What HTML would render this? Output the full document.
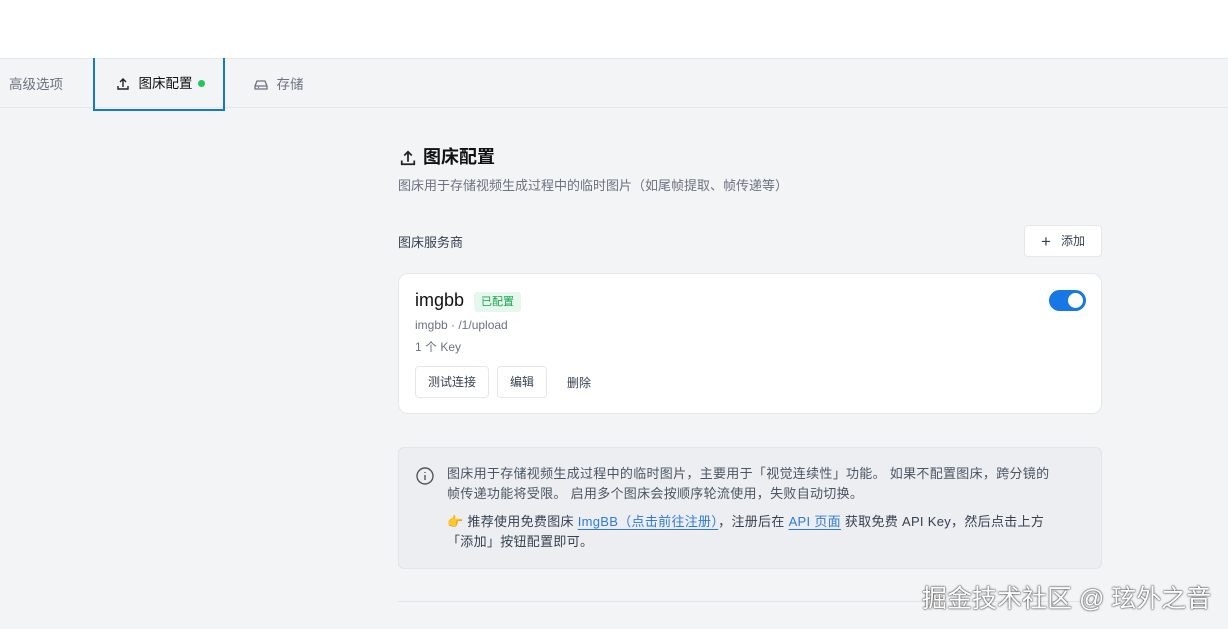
<!DOCTYPE html>
<html><head><meta charset="utf-8"><style>
*{box-sizing:border-box;margin:0;padding:0}
body{width:1228px;height:629px;overflow:hidden;background:#f3f4f6;font-family:"Liberation Sans","Noto Sans CJK SC",sans-serif;color:#1f2937;position:relative}
.top{height:59px;background:#fff;border-bottom:1px solid #e5e7eb}
.tabs{height:49px;border-bottom:1px solid #e5e7eb;position:relative;font-size:13.5px}
.tab{position:absolute;top:0;height:48px;line-height:48px;color:#6b7280}
.active{left:93px;width:132px;top:-1px;height:53px;border:2px solid #1677d2;border-top:none;color:#111;padding-left:20px;line-height:48px}
.dot{display:inline-block;width:7px;height:7px;border-radius:50%;background:#22c55e;margin-left:5px;vertical-align:1px}
svg{vertical-align:middle}
.abs{position:absolute}
.card{position:absolute;left:398px;top:273px;width:704px;height:141px;background:#fff;border:1px solid #e5e7eb;border-radius:10px}
.btn{position:absolute;height:32px;line-height:30px;border:1px solid #e5e7eb;border-radius:4px;background:#fff;font-size:12px;color:#374151;text-align:center}
.info{position:absolute;left:398px;top:447px;width:704px;height:122px;background:#eceef1;border:1px solid #e1e4e8;border-radius:6px;font-size:13px;color:#4b5563;line-height:20px;letter-spacing:0.3px}
a{color:#2f7bd8;text-decoration:underline;text-underline-offset:3px}
</style></head><body>
<div class="top"></div>
<div class="tabs">
<div class="tab" style="left:9px;top:2px">高级选项</div>
<div class="tab active" style="padding-top:2px"><svg width="16" height="16" viewBox="0 0 16 16" fill="none" stroke="#222" stroke-width="1.4"><path d="M8 11V3M5 6l3-3 3 3M3 10v3h10v-3"/></svg>&nbsp; 图床配置<span class="dot"></span></div>
<div class="tab" style="left:253px;top:2px"><svg width="16" height="16" viewBox="0 0 16 16" fill="none" stroke="#6b7280" stroke-width="1.3"><path d="M2 9l2-5h8l2 5v3H2zM2 9h12M5 10.5h1"/></svg>&nbsp; 存储</div>
</div>
<div class="abs" style="left:398px;top:143px;font-size:18px;font-weight:bold;color:#111"><svg width="20" height="20" viewBox="0 0 16 16" fill="none" stroke="#222" stroke-width="1.4"><path d="M8 11V3M5 6l3-3 3 3M3 10v3h10v-3"/></svg> 图床配置</div>
<div class="abs" style="left:398px;top:175px;font-size:13px;color:#6b7280">图床用于存储视频生成过程中的临时图片（如尾帧提取、帧传递等）</div>
<div class="abs" style="left:398px;top:232px;font-size:13px;color:#374151">图床服务商</div>
<div class="btn" style="left:1024px;top:225px;width:78px;height:32px;font-size:12px"><span style="font-size:17px;vertical-align:-2px">+</span>&nbsp;&nbsp; 添加</div>
<div class="card">
<div class="abs" style="left:16px;top:16px;font-size:18px;color:#111">imgbb</div>
<div class="abs" style="left:75px;top:18px;height:20px;line-height:20px;padding:0 7px;background:#e6f7ee;color:#16a34a;font-size:11px;border-radius:3px">已配置</div>
<div class="abs" style="left:650px;top:16px;width:37px;height:21px;border-radius:11px;background:#1677e5"><div style="position:absolute;right:3px;top:3px;width:15px;height:15px;border-radius:50%;background:#fff"></div></div>
<div class="abs" style="left:16px;top:44px;font-size:12px;color:#6b7280">imgbb · /1/upload</div>
<div class="abs" style="left:16px;top:64px;font-size:12px;color:#6b7280">1 个 Key</div>
<div class="btn" style="left:16px;top:92px;width:74px">测试连接</div>
<div class="btn" style="left:98px;top:92px;width:50px">编辑</div>
<div class="abs" style="left:168px;top:100px;font-size:12px;color:#374151">删除</div>
</div>
<div class="info">
<svg class="abs" style="left:16px;top:18px" width="20" height="20" viewBox="0 0 20 20" fill="none" stroke="#555" stroke-width="1.4"><circle cx="10" cy="10" r="8"/><path d="M10 9v5M10 6v1"/></svg>
<div class="abs" style="left:48px;top:16px;width:650px;white-space:nowrap">图床用于存储视频生成过程中的临时图片，主要用于「视觉连续性」功能。 如果不配置图床，跨分镜的<br>帧传递功能将受限。 启用多个图床会按顺序轮流使用，失败自动切换。</div>
<div class="abs" style="left:48px;top:64px;width:650px;color:#374151;white-space:nowrap"><span style="color:#e0a400">👉</span> 推荐使用免费图床 <a>ImgBB（点击前往注册）</a>，注册后在 <a>API 页面</a> 获取免费 API Key，然后点击上方<br>「添加」按钮配置即可。</div>
</div>
<div class="abs" style="left:398px;top:601px;width:704px;border-top:1px solid #e1e4e8"></div>
<div class="abs" style="left:922px;top:579px;font-size:25px;color:#fff;text-shadow:0 0 2px #333,0 0 1px #333">掘金技术社区 @ 玹外之音</div>
</body></html>
